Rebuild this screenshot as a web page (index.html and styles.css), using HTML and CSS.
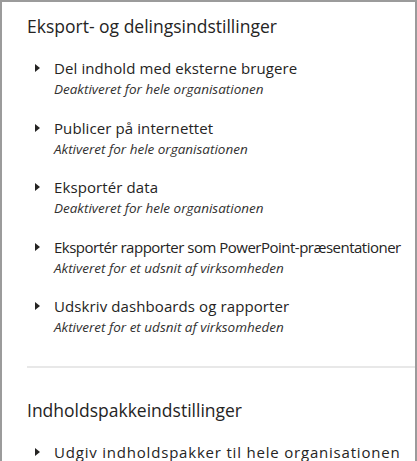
FILE: index.html
```html
<!DOCTYPE html>
<html lang="da">
<head>
<meta charset="utf-8">
<title>Eksport- og delingsindstillinger</title>
<link rel="stylesheet" href="styles.css">
</head>
<body>
<div class="panel">
  <section class="section">
    <h2 class="section-title">Eksport- og delingsindstillinger</h2>
    <ul class="items">
      <li class="item">
        <span class="caret"></span>
        <div class="item-text">
          <div class="item-title">Del indhold med eksterne brugere</div>
          <div class="item-sub">Deaktiveret for hele organisationen</div>
        </div>
      </li>
      <li class="item">
        <span class="caret"></span>
        <div class="item-text">
          <div class="item-title">Publicer på internettet</div>
          <div class="item-sub">Aktiveret for hele organisationen</div>
        </div>
      </li>
      <li class="item">
        <span class="caret"></span>
        <div class="item-text">
          <div class="item-title">Eksportér data</div>
          <div class="item-sub">Deaktiveret for hele organisationen</div>
        </div>
      </li>
      <li class="item">
        <span class="caret"></span>
        <div class="item-text">
          <div class="item-title item-title-long">Eksportér rapporter som PowerPoint-præsentationer</div>
          <div class="item-sub">Aktiveret for et udsnit af virksomheden</div>
        </div>
      </li>
      <li class="item">
        <span class="caret"></span>
        <div class="item-text">
          <div class="item-title">Udskriv dashboards og rapporter</div>
          <div class="item-sub">Aktiveret for et udsnit af virksomheden</div>
        </div>
      </li>
    </ul>
  </section>
  <hr class="divider">
  <section class="section section-next">
    <h2 class="section-title">Indholdspakkeindstillinger</h2>
    <ul class="items">
      <li class="item">
        <span class="caret"></span>
        <div class="item-text">
          <div class="item-title item-title-wide">Udgiv indholdspakker til hele organisationen</div>
        </div>
      </li>
    </ul>
  </section>
</div>
</body>
</html>
```
FILE: styles.css
```css
html, body {
  margin: 0;
  padding: 0;
  background: #ffffff;
}
body {
  font-family: "Open Sans", "Noto Sans", "Liberation Sans", sans-serif;
  color: #252423;
  overflow: hidden;
}
.panel {
  box-sizing: border-box;
  height: 461px;
  border: 2px solid #9b9b9b;
  border-bottom: none;
  padding: 12px 0 0 25px;
  overflow: hidden;
}
.section-title {
  margin: 0;
  font-size: 17.5px;
  font-weight: 400;
  line-height: 24px;
}
.items {
  list-style: none;
  margin: 19px 0 0;
  padding: 0;
}
.item {
  display: flex;
  align-items: flex-start;
  gap: 14px;
  padding-left: 8px;
  margin-bottom: 17.5px;
}
.item-text {
  min-width: 0;
}
.caret {
  flex: none;
  width: 0;
  height: 0;
  margin-top: 7px;
  border-top: 4px solid transparent;
  border-bottom: 4px solid transparent;
  border-left: 5px solid #252423;
}
.item-title {
  font-size: 15px;
  line-height: 22px;
  letter-spacing: 0.1px;
  white-space: nowrap;
}
.item-title-long {
  letter-spacing: -0.5px;
}
.item-title-wide {
  letter-spacing: 0.8px;
}
.item-sub {
  font-size: 13.5px;
  font-style: italic;
  line-height: 20px;
  color: #323130;
  white-space: nowrap;
}
.divider {
  margin: 29px 0 0;
  border: none;
  height: 2px;
  background: #e8e8e8;
}
.section-next {
  padding-top: 30px;
}
```
